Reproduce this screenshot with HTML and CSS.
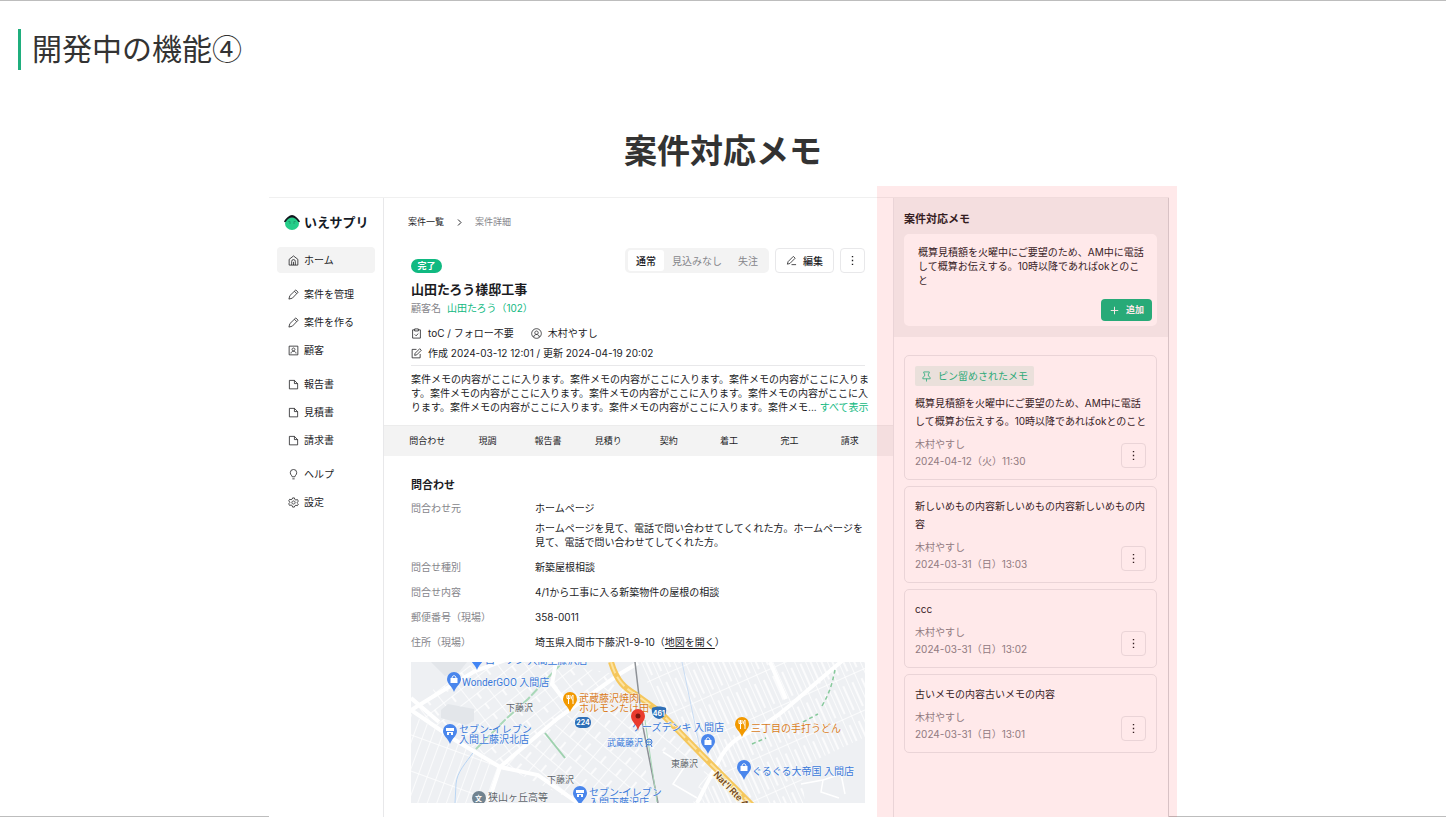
FILE: index.html
```html
<!DOCTYPE html>
<html lang="ja">
<head>
  <meta charset="UTF-8">
  <meta name="viewport" content="width=device-width, initial-scale=1.0">
  <title>開発中の機能④ - 案件対応メモ</title>
  <link rel="stylesheet" href="styles.css">
</head>
<body>
  <!-- アイコン定義 -->
  <svg class="defs" aria-hidden="true">
    <symbol id="i-home" viewBox="0 0 24 24"><path d="M2.500 9.500 12 2l9.500 7.500V22h-19zM8 22v-8a4 4 0 0 1 8 0v8M12 15v7"/></symbol>
    <symbol id="i-pencil" viewBox="0 0 24 24"><path d="M2 22l2-7.500L17 2l5 5L9.500 20zM14 5l5 5"/></symbol>
    <symbol id="i-user-box" viewBox="0 0 24 24"><path d="M2.500 2.500h19v19h-19zM6.500 18.500c0-6.500 11-6.500 11 0M12 6.500a3.200 3.200 0 1 0 .01 0z"/></symbol>
    <symbol id="i-file" viewBox="0 0 24 24"><path d="M3 3h11l7 7v11.500H3zM14 3v7h7"/></symbol>
    <symbol id="i-bulb" viewBox="0 0 24 24"><path d="M9 17c0-3-4-4-4-9a7 7 0 0 1 14 0c0 5-4 6-4 9zM9.500 21.500h5"/></symbol>
    <symbol id="i-gear" viewBox="0 0 24 24"><path d="M10 2h4l.8 3.200 2.400 1.400L20.500 5.500l2 3.500-2.400 2.500v1.500l2.400 2.400-2 3.500-3.300-.9-2.400 1.400L14 22h-4l-.8-3.100-2.400-1.400-3.300.9-2-3.500 2.400-2.400V11L1.500 8.500l2-3.500 3.300.9 2.400-1.400zM12 8.500a3.500 3.500 0 1 0 .01 0z"/></symbol>
    <symbol id="i-clip" viewBox="0 0 24 24"><path d="M8 4H3.500v18h17V4H16M8 2h8v4.500H8zM8 14l3 3 5-5"/></symbol>
    <symbol id="i-user" viewBox="0 0 24 24"><path d="M12 1.500a10.500 10.500 0 1 0 .01 0zM6 19.500c0-7 12-7 12 0M12 6.500a3.700 3.700 0 1 0 .01 0z"/></symbol>
    <symbol id="i-edit" viewBox="0 0 24 24"><path d="M12 3H2.500v18.500H20V13M8 16l1-4.500L19 1.500l3.500 3.500-10 10z"/></symbol>
    <symbol id="i-write" viewBox="0 0 24 24"><path d="M3 20l1.500-5.500L16 3l4 4L8.500 18.500zM12 21h10"/></symbol>
    <symbol id="i-dots" viewBox="0 0 24 24"><path class="solid" d="M10.500 2h3v3h-3zM10.500 10.500h3v3h-3zM10.500 19h3v3h-3z"/></symbol>
    <symbol id="i-chevron" viewBox="0 0 24 24"><path d="M8 4l8 8-8 8"/></symbol>
    <symbol id="i-plus" viewBox="0 0 24 24"><path d="M12 2v20M2 12h20"/></symbol>
    <symbol id="i-pin" viewBox="0 0 24 24"><path d="M6 2h12v3l-2 1v5l4 3v3H4v-3l4-3V6L6 5zM12 17v6"/></symbol>
  </svg>

  <div class="slide">
    <header class="slide-header">
      <h1>開発中の機能④</h1>
    </header>
    <h2 class="slide-title">案件対応メモ</h2>

    <div class="stage">
      <div class="app">
        <aside class="sidebar">
          <div class="logo">
            <svg class="logo-mark" viewBox="0 0 32 30" aria-hidden="true">
              <ellipse cx="16" cy="17" rx="14" ry="13" fill="#25cd89"/>
              <path d="M0 13C4 6 11 0 16 0s12 6 16 13c-1 2-3 2-4 0-3-5-8-8-12-8S7 8 4 13c-1 2-3 2-4 0z" fill="#10151c"/>
              <path d="M9 13l4 1M19 14l4-1M11 16.500h2M19 16.500h2" stroke="#147653" stroke-width="1.300" fill="none"/>
            </svg>
            <span>いえサプリ</span>
          </div>
          <nav class="menu">
            <div class="menu-group">
              <a class="menu-item active" href="#"><svg class="icon"><use href="#i-home"/></svg>ホーム</a>
            </div>
            <div class="menu-group">
              <a class="menu-item" href="#"><svg class="icon"><use href="#i-pencil"/></svg>案件を管理</a>
              <a class="menu-item" href="#"><svg class="icon"><use href="#i-pencil"/></svg>案件を作る</a>
              <a class="menu-item" href="#"><svg class="icon"><use href="#i-user-box"/></svg>顧客</a>
            </div>
            <div class="menu-group">
              <a class="menu-item" href="#"><svg class="icon"><use href="#i-file"/></svg>報告書</a>
              <a class="menu-item" href="#"><svg class="icon"><use href="#i-file"/></svg>見積書</a>
              <a class="menu-item" href="#"><svg class="icon"><use href="#i-file"/></svg>請求書</a>
            </div>
            <div class="menu-group">
              <a class="menu-item" href="#"><svg class="icon"><use href="#i-bulb"/></svg>ヘルプ</a>
              <a class="menu-item" href="#"><svg class="icon"><use href="#i-gear"/></svg>設定</a>
            </div>
          </nav>
        </aside>

        <main class="detail">
          <nav class="breadcrumb">
            <a href="#">案件一覧</a>
            <svg class="icon-sm"><use href="#i-chevron"/></svg>
            <span>案件詳細</span>
          </nav>

          <section class="summary">
            <div class="summary-head">
              <div class="summary-name">
                <span class="badge">完了</span>
                <h3>山田たろう様邸工事</h3>
                <p class="customer">顧客名<a href="#">山田たろう（102）</a></p>
              </div>
              <div class="toolbar">
                <div class="segment">
                  <button type="button" class="selected">通常</button>
                  <button type="button">見込みなし</button>
                  <button type="button">失注</button>
                </div>
                <button type="button" class="btn btn-edit"><svg class="icon"><use href="#i-write"/></svg>編集</button>
                <button type="button" class="btn btn-dots" aria-label="メニュー"><svg class="icon"><use href="#i-dots"/></svg></button>
              </div>
            </div>
            <div class="meta">
              <span><svg class="icon"><use href="#i-clip"/></svg>toC / フォロー不要</span>
              <span><svg class="icon"><use href="#i-user"/></svg>木村やすし</span>
            </div>
            <div class="meta">
              <span><svg class="icon"><use href="#i-edit"/></svg>作成 2024-03-12 12:01 / 更新 2024-04-19 20:02</span>
            </div>
            <p class="note">案件メモの内容がここに入ります。案件メモの内容がここに入ります。案件メモの内容がここに入りま<br>す。案件メモの内容がここに入ります。案件メモの内容がここに入ります。案件メモの内容がここに入<br>ります。案件メモの内容がここに入ります。案件メモの内容がここに入ります。案件メモ...<a href="#">すべて表示</a></p>
          </section>

          <nav class="tabs">
            <a href="#">問合わせ</a>
            <a href="#">現調</a>
            <a href="#">報告書</a>
            <a href="#">見積り</a>
            <a href="#">契約</a>
            <a href="#">着工</a>
            <a href="#">完工</a>
            <a href="#">請求</a>
          </nav>

          <section class="inquiry">
            <h4>問合わせ</h4>
            <dl class="fields">
              <dt>問合わせ元</dt>
              <dd>
                <p>ホームページ</p>
                <p>ホームページを見て、電話で問い合わせてしてくれた方。ホームページを<br>見て、電話で問い合わせてしてくれた方。</p>
              </dd>
              <dt>問合せ種別</dt>
              <dd>新築屋根相談</dd>
              <dt>問合せ内容</dt>
              <dd>4/1から工事に入る新築物件の屋根の相談</dd>
              <dt>郵便番号（現場）</dt>
              <dd>358-0011</dd>
              <dt>住所（現場）</dt>
              <dd>埼玉県入間市下藤沢1-9-10（<a href="#">地図を開く</a>）</dd>
            </dl>

            <svg class="map" viewBox="0 0 454 141" preserveAspectRatio="xMidYMid slice" role="img" aria-label="地図">
              <defs>
                <pattern id="blocks-a" width="22" height="13" patternUnits="userSpaceOnUse" patternTransform="rotate(-38)">
                  <path d="M0 0h22M0 0v13M11 0v7" class="street"/>
                </pattern>
                <pattern id="blocks-b" width="10" height="38" patternUnits="userSpaceOnUse" patternTransform="rotate(-24)">
                  <path d="M0 0v38M0 0h10M5 8v26" class="street"/>
                </pattern>
                <pattern id="blocks-c" width="9" height="34" patternUnits="userSpaceOnUse" patternTransform="rotate(20)">
                  <path d="M0 0v34M0 0h9" class="street"/>
                </pattern>
                <pattern id="blocks-d" width="20" height="15" patternUnits="userSpaceOnUse" patternTransform="rotate(40)">
                  <path d="M0 0h20M0 0v15M10 7v8" class="street"/>
                </pattern>
                <g id="pin">
                  <path d="M0 12C-2 6-7 4-7-1a7 7 0 0 1 14 0c0 5-5 7-7 13z"/>
                </g>
                <g id="bag"><path d="M-3.500-2h7v5h-7z" fill="#fff"/><path d="M-2-2c0-3 4-3 4 0" stroke="#fff" fill="none"/></g>
                <g id="shop"><path d="M-4-4h8v3h-8zM-3 0h6v3h-2V1h-2v2h-2z" fill="#fff"/></g>
                <g id="food"><path d="M-3-5v3.500h1.500V4M0-5v3.500h-1.500V-5M3 4v-9c-2 1-2 5 0 5" stroke="#fff" fill="none"/></g>
              </defs>

              <rect width="454" height="141" fill="#eef0f3"/>
              <path d="M48 4L140 0 204 12 92 104 0 48z" fill="url(#blocks-a)"/>
              <path d="M92 104L206 14 248 50 304 108 290 141H167z" fill="url(#blocks-d)"/>
              <path d="M0 52L88 106 80 141H0z" fill="url(#blocks-c)"/>
              <path d="M226 0H454V141H290L306 104 250 48z" fill="url(#blocks-b)"/>
              <path d="M20 0h36l-8 10-14 4zM30 48l7-6 26 5v12l-8 4-25-7z" fill="#e3e6ea"/>
              <path d="M228 84l40 8 26 14-12 35h-38zM390 105l64-30v66h-60z" fill="#eef0f3"/>
              <path d="M252 90l22 14-12 18 24 14M390 122l22-4-2 12 18 6M412 118l18-6 4 20" class="street"/>

              <!-- 小川と緑道 -->
              <path d="M64 88C54 102 46 110 45 122l-1 19" stroke="#b9d5f3" fill="none"/>
              <path d="M271 0l20 96" stroke="#c9dcf3" fill="none"/>
              <path d="M149 3l-32 34-22 20-31 31" stroke="#a9d8b8" stroke-width="2" stroke-dasharray="9 2" fill="none"/>
              <path d="M134 71l20 25" stroke="#9ed1ae" stroke-width="2"/>

              <!-- 幹線道路 -->
              <path d="M0 48L64 9 100-4M0 48l44 30 45 27 38 8 40 28M89 105l58-49 60-43 20-12M89 105l-12 36" class="road"/>
              <path d="M286 141l21-41c8-16 18-24 32-30 28-13 38-26 92-71M359 0l16 37M0 36l28 24M145 0l-4 22 20 26" class="road"/>
              <path d="M200 0c6 20 14 26 24 32l25 18 42 43 50 50" stroke="#f5c75d" stroke-width="6" fill="none"/>
              <path d="M200 0c6 20 14 26 24 32l25 18 42 43 50 50" stroke="#fde3a0" stroke-width="2" stroke-dasharray="12 4" fill="none"/>
              <path d="M224 0l7 60 16 81" stroke="#8d9196" stroke-width="1.500" fill="none"/>
              <path d="M234 58l12 82" stroke="#a9d8b8" fill="none"/>
              <path d="M341 82l14-6M392 60l15-8M411 44c8-14 10-22 13-36" stroke="#86c99b" stroke-width="1.500" stroke-dasharray="4 3" fill="none"/>

              <!-- ピン -->
              <g transform="translate(66 -4)" fill="#4285f4"><use href="#pin"/></g>
              <g transform="translate(43 18)" fill="#4a86ec"><use href="#pin"/><use href="#bag"/></g>
              <g transform="translate(39 70)" fill="#4a86ec"><use href="#pin"/><use href="#shop"/></g>
              <g transform="translate(169 132)" fill="#4a86ec"><use href="#pin"/><use href="#shop"/></g>
              <g transform="translate(297 80)" fill="#4a86ec"><use href="#pin"/><use href="#bag"/></g>
              <g transform="translate(333 106)" fill="#4a86ec"><use href="#pin"/><use href="#bag"/></g>
              <g transform="translate(159 38)" fill="#f29900"><use href="#pin"/><use href="#food"/></g>
              <g transform="translate(331 63)" fill="#f29900"><use href="#pin"/><use href="#food"/></g>
              <circle cx="68" cy="136" r="7" fill="#718390"/>
              <text x="64" y="139" class="shield">文</text>

              <!-- 地名・店名 -->
              <g class="label blue">
                <text x="74" y="2">ローソン 入間上藤沢店</text>
                <text x="51" y="24">WonderGOO 入間店</text>
                <text x="48" y="71">セブン-イレブン</text>
                <text x="48" y="81">入間上藤沢北店</text>
                <text x="221" y="69">ケーズデンキ 入間店</text>
                <text x="341" y="113">ぐるぐる大帝国 入間店</text>
                <text x="178" y="134">セブン-イレブン</text>
                <text x="178" y="144">入間下藤沢店</text>
                <text x="196" y="84" class="small">武蔵藤沢</text>
              </g>
              <circle cx="238" cy="80" r="3" fill="none" stroke="#3a79d8"/>
              <path d="M236 80h4M236 83l-1 2M240 83l1 2" stroke="#3a79d8"/>
              <g class="label orange">
                <text x="168" y="40">武蔵藤沢焼肉</text>
                <text x="168" y="50">ホルモンたけ田</text>
                <text x="340" y="70">三丁目の手打うどん</text>
              </g>
              <g class="label gray">
                <text x="95" y="49" class="small">下藤沢</text>
                <text x="136" y="121" class="small">下藤沢</text>
                <text x="260" y="105" class="small">東藤沢</text>
                <text x="77" y="139">狭山ヶ丘高等</text>
              </g>
              <rect x="164" y="55" width="16" height="11" rx="5" fill="#2f6fb7"/>
              <text x="172" y="63" class="shield" text-anchor="middle">224</text>
              <path d="M241 46c4-2 10-2 14 0 1 6-2 10-7 11-5-1-8-5-7-11z" fill="#2f6fb7"/>
              <text x="248" y="54" class="shield" text-anchor="middle">461</text>
              <text transform="translate(302 113) rotate(46)" class="route">Nat'l Rte 463</text>
              <g transform="translate(227 56)"><path d="M0 13C-1 6-7 4-7-2a7 7 0 0 1 14 0c0 6-6 8-7 15z" fill="#ea3b2e"/><circle cy="-2" r="2.500" fill="#7b1710"/></g>
            </svg>
          </section>
        </main>

        <aside class="memo">
          <form class="memo-form">
            <label for="memo-text">案件対応メモ</label>
            <div class="memo-input">
              <textarea id="memo-text" rows="3">概算見積額を火曜中にご要望のため、AM中に電話して概算お伝えする。10時以降であればokとのこと</textarea>
              <button type="button" class="btn-add"><svg class="icon-sm"><use href="#i-plus"/></svg>追加</button>
            </div>
          </form>

          <div class="memo-list">
            <article class="card">
              <span class="pinned"><svg class="icon"><use href="#i-pin"/></svg>ピン留めされたメモ</span>
              <p class="card-text">概算見積額を火曜中にご要望のため、AM中に電話<br>して概算お伝えする。10時以降であればokとのこと</p>
              <footer class="card-foot">
                <div>木村やすし<br>2024-04-12（火）11:30</div>
                <button type="button" class="btn btn-dots" aria-label="メニュー"><svg class="icon"><use href="#i-dots"/></svg></button>
              </footer>
            </article>
            <article class="card">
              <p class="card-text">新しいめもの内容新しいめもの内容新しいめもの内容</p>
              <footer class="card-foot">
                <div>木村やすし<br>2024-03-31（日）13:03</div>
                <button type="button" class="btn btn-dots" aria-label="メニュー"><svg class="icon"><use href="#i-dots"/></svg></button>
              </footer>
            </article>
            <article class="card">
              <p class="card-text">ccc</p>
              <footer class="card-foot">
                <div>木村やすし<br>2024-03-31（日）13:02</div>
                <button type="button" class="btn btn-dots" aria-label="メニュー"><svg class="icon"><use href="#i-dots"/></svg></button>
              </footer>
            </article>
            <article class="card">
              <p class="card-text">古いメモの内容古いメモの内容</p>
              <footer class="card-foot">
                <div>木村やすし<br>2024-03-31（日）13:01</div>
                <button type="button" class="btn btn-dots" aria-label="メニュー"><svg class="icon"><use href="#i-dots"/></svg></button>
              </footer>
            </article>
          </div>
        </aside>
      </div>
      <div class="highlight"></div>
    </div>
  </div>
</body>
</html>
```

FILE: styles.css
```css
:root {
  --green: #10b981;
  --text: #1c1c1f;
  --gray: #85858a;
  --line: #e8e8ea;
  --bg-gray: #f3f3f3;
}

* {
  box-sizing: border-box;
  margin: 0;
  padding: 0;
}

body {
  font-family: Inter, "Noto Sans CJK JP", sans-serif;
  font-size: 10px;
  line-height: 14px;
  color: var(--text);
  background: #fff;
}

a {
  color: inherit;
  text-decoration: none;
}

button,
textarea {
  font: inherit;
  color: inherit;
}

button {
  cursor: pointer;
}

.defs {
  display: none;
}

.icon,
.icon-sm {
  width: 11px;
  height: 11px;
  flex: none;
  fill: none;
  stroke: currentColor;
  stroke-width: 1.7;
  stroke-linejoin: round;
}

.icon-sm {
  width: 9px;
  height: 9px;
  stroke-width: 2.5;
}

.solid {
  fill: currentColor;
  stroke: none;
}

/* スライド */
.slide {
  display: flex;
  flex-direction: column;
  min-height: 100vh;
  border-top: 1px solid #bdbdbd;
  border-bottom: 1px solid #bdbdbd;
}

.slide-header {
  padding: 28px 18px 0;
}

.slide-header h1 {
  border-left: 3px solid #1fae7d;
  padding: 0 0 5px 11px;
  font-family: "Noto Sans CJK JP", sans-serif;
  font-size: 30px;
  font-weight: 400;
  line-height: 36px;
  color: #333;
}

.slide-title {
  margin: 57px 0 22px;
  font-size: 33px;
  line-height: 48px;
  text-align: center;
  color: #333;
}

.stage {
  position: relative;
  flex: 1;
  display: flex;
  width: 100%;
  max-width: 908px;
  margin: 0 auto -1px;
  padding-right: 8px;
}

.highlight {
  position: absolute;
  top: -11px;
  right: 0;
  bottom: 0;
  width: 300px;
  background: rgba(255, 40, 50, 0.1);
  pointer-events: none;
}

.app {
  flex: 1;
  display: flex;
  min-width: 0;
  background: #fff;
  border-top: 1px solid #f0f0f0;
}

/* サイドバー */
.sidebar {
  width: 115px;
  flex: none;
  padding: 14px 8px;
  border-right: 1px solid var(--line);
}

.logo {
  display: flex;
  align-items: center;
  gap: 4px;
  height: 20px;
  padding-left: 7px;
  font-size: 13px;
  font-weight: 700;
  color: #141a26;
}

.logo-mark {
  width: 16px;
  height: 15px;
}

.menu {
  display: flex;
  flex-direction: column;
  gap: 8px;
  margin-top: 15px;
}

.menu-group {
  display: flex;
  flex-direction: column;
  gap: 2px;
}

.menu-item {
  display: flex;
  align-items: center;
  gap: 5px;
  height: 26px;
  padding-left: 11px;
  border-radius: 4px;
}

.menu-item.active {
  background: var(--bg-gray);
}

/* 案件詳細 */
.detail {
  flex: 1;
  min-width: 0;
}

.breadcrumb {
  display: flex;
  align-items: center;
  gap: 11px;
  padding: 17px 24px 0;
  font-size: 9px;
}

.breadcrumb span {
  color: var(--gray);
}

.summary {
  padding: 19px 28px 11px 27px;
}

.summary-head {
  display: flex;
  justify-content: space-between;
  align-items: flex-start;
}

.summary-name {
  padding-top: 11px;
}

.badge {
  display: block;
  width: 31px;
  border-radius: 7px;
  background: var(--green);
  color: #fff;
  font-size: 9px;
  font-weight: 700;
  text-align: center;
}

.summary-name h3 {
  margin-top: 6px;
  font-size: 13px;
  line-height: 20px;
}

.customer {
  line-height: 18px;
  color: var(--gray);
}

.customer a {
  margin-left: 6px;
  color: var(--green);
}

.toolbar {
  display: flex;
  gap: 6px;
}

.segment {
  display: flex;
  height: 25px;
  padding: 2px 3px;
  border-radius: 5px;
  background: var(--bg-gray);
}

.segment button {
  padding: 0 8px;
  border: none;
  border-radius: 3px;
  background: none;
  color: var(--gray);
}

.segment .selected {
  background: #fff;
  color: var(--text);
  font-weight: 500;
}

.btn {
  display: flex;
  align-items: center;
  justify-content: center;
  gap: 6px;
  height: 25px;
  border: 1px solid var(--line);
  border-radius: 4px;
  background: none;
}

.btn-edit {
  padding: 0 10px;
  font-weight: 500;
}

.btn-dots {
  width: 25px;
  flex: none;
}

.meta {
  display: flex;
  gap: 17px;
  line-height: 20px;
}

.summary-head + .meta {
  margin-top: 6px;
}

.meta span {
  display: flex;
  align-items: center;
  gap: 6px;
}

.note {
  margin-top: 2px;
  padding-top: 6px;
  border-top: 1px solid var(--line);
  white-space: nowrap;
}

.note a {
  margin-left: 3px;
  color: var(--green);
}

.tabs {
  display: flex;
  padding: 0 13px;
  border-top: 1px solid #ececec;
  background: var(--bg-gray);
  font-size: 9px;
  line-height: 30px;
}

.tabs a {
  flex: 1;
  text-align: center;
}

.inquiry {
  padding: 19px 28px 14px 27px;
}

.inquiry h4 {
  font-size: 11px;
  line-height: 20px;
}

.fields {
  display: grid;
  grid-template-columns: 124px 1fr;
  row-gap: 11px;
  margin: 6px 0 13px;
}

.fields dt {
  color: var(--gray);
}

.fields dd {
  white-space: nowrap;
  min-width: 0;
}

.fields p + p {
  margin-top: 6px;
}

.fields a {
  text-decoration: underline;
  text-underline-offset: 2px;
}

/* 地図 */
.map {
  display: block;
  width: 100%;
  height: 141px;
}

.street {
  fill: none;
  stroke: #fff;
  stroke-width: 1.5;
}

.road {
  fill: none;
  stroke: #fff;
  stroke-width: 4;
}

.label {
  font-family: Roboto, "Noto Sans CJK JP", sans-serif;
  font-size: 10px;
  stroke: #f6f8fa;
  stroke-width: 1;
  paint-order: stroke;
}

.label .small {
  font-size: 9px;
}

.blue {
  fill: #3a79d8;
}

.orange {
  fill: #d97c1c;
}

.gray {
  fill: #5f656b;
}

.shield {
  font-size: 7px;
  font-weight: 700;
  fill: #fff;
}

.route {
  font-size: 9px;
  font-weight: 600;
  fill: #74491a;
  stroke: #fdf3d8;
  stroke-width: 2;
  paint-order: stroke;
}

/* 対応メモ */
.memo {
  width: 276px;
  flex: none;
  border-left: 1px solid var(--line);
  border-right: 1px solid #d4d4d6;
}

.memo-form {
  padding: 11px 11px 11px 10px;
  background: var(--bg-gray);
}

.memo-form label {
  display: block;
  font-size: 11px;
  font-weight: 700;
  line-height: 20px;
}

.memo-input {
  display: flex;
  flex-direction: column;
  align-items: flex-end;
  gap: 12px;
  margin-top: 5px;
  padding: 11px 5px 5px 14px;
  border-radius: 5px;
  background: #fff;
}

.memo-input textarea {
  display: block;
  width: 100%;
  padding-right: 4px;
  border: none;
  outline: none;
  resize: none;
  overflow: hidden;
  background: none;
}

.btn-add {
  display: flex;
  align-items: center;
  gap: 7px;
  height: 22px;
  padding: 0 8px 0 9px;
  border: none;
  border-radius: 4px;
  background: var(--green);
  color: #fff;
  font-size: 9px;
  font-weight: 700;
}

.memo-list {
  display: flex;
  flex-direction: column;
  gap: 6px;
  padding: 18px 11px 18px 10px;
}

.card {
  padding: 10px 10px 9px;
  border: 1px solid var(--line);
  border-radius: 5px;
}

.pinned {
  display: inline-flex;
  align-items: center;
  gap: 6px;
  height: 20px;
  margin-bottom: 8px;
  padding: 0 6px;
  border-radius: 2px;
  background: #e8f5ef;
  color: var(--green);
  vertical-align: top;
}

.card-text {
  margin-right: -6px;
  line-height: 18px;
}

.card-foot {
  display: flex;
  justify-content: space-between;
  align-items: center;
  margin-top: 6px;
  line-height: 17px;
  color: var(--gray);
}

.card-foot .btn {
  margin: 7px 0 2px;
  color: var(--text);
}
```
